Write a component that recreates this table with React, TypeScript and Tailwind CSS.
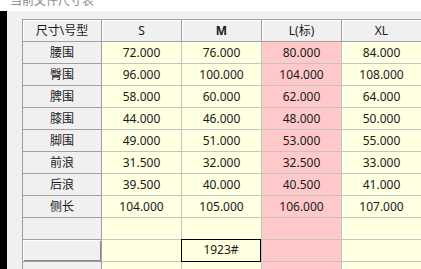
import React from "react";

const cols = ["S", "M", "L(标)", "XL"];
const rows: [string, string[]][] = [
  ["腰围", ["72.000", "76.000", "80.000", "84.000"]],
  ["臀围", ["96.000", "100.000", "104.000", "108.000"]],
  ["脾围", ["58.000", "60.000", "62.000", "64.000"]],
  ["膝围", ["44.000", "46.000", "48.000", "50.000"]],
  ["脚围", ["49.000", "51.000", "53.000", "55.000"]],
  ["前浪", ["31.500", "32.000", "32.500", "33.000"]],
  ["后浪", ["39.500", "40.000", "40.500", "41.000"]],
  ["侧长", ["104.000", "105.000", "106.000", "107.000"]],
  ["", ["", "", "", ""]],
  ["", ["", "1923#", "", ""]],
  ["", ["", "", "", ""]],
];

function DataCell({ v, ci, ri }: { v: string; ci: number; ri: number }) {
  const pink = ci === 2;
  const editing = ri === 9 && ci === 1;
  return (
    <div
      className={`h-[22px] w-[80px] shrink-0 border-r border-b border-[#c4c4c4] flex items-center justify-center ${
        pink ? "bg-[#ffc9c9]" : "bg-[#ffffe1]"
      }`}
    >
      {editing ? (
        <div className="w-full h-full border border-black -ml-[1px] -mt-[1px] box-content flex items-center justify-center bg-[#ffffe1]">
          {v}
        </div>
      ) : (
        v
      )}
    </div>
  );
}

export default function App() {
  return (
    <div
      className="w-[421px] h-[269px] overflow-hidden bg-white flex flex-col text-[12px] text-[#1a1a1a]"
      style={{ fontFamily: '"Noto Sans", "Noto Sans CJK SC", sans-serif' }}
    >
      <div className="h-[11px] shrink-0 overflow-hidden bg-white pl-[10px]">
        <div className="-mt-[7px] text-[12px] leading-[16px] text-[#8a8a8a]">当前文件尺寸表</div>
      </div>
      <div className="flex flex-1 min-h-0">
        <div className="w-[7px] bg-black shrink-0" />
        <div className="flex-1 bg-[#f0f0f0] pl-[15px] pt-[8px] overflow-hidden">
          <div className="border-l border-t border-[#a0a0a0] w-max">
            <div className="flex">
              <div className="h-[22px] w-[79px] shrink-0 border-r border-b border-[#a0a0a0] bg-[#f0f0f0] flex items-center justify-center shadow-[inset_1px_1px_0_#ffffff]">
                尺寸\号型
              </div>
              {cols.map((c) => (
                <div
                  key={c}
                  className={`h-[22px] w-[80px] shrink-0 border-r border-b border-[#a0a0a0] bg-[#f0f0f0] flex items-center justify-center shadow-[inset_1px_1px_0_#ffffff] ${
                    c === "M" ? "font-bold" : ""
                  }`}
                >
                  {c}
                </div>
              ))}
            </div>
            {rows.map(([name, vals], ri) => (
              <div className="flex" key={ri}>
                <div
                  className={`h-[22px] w-[79px] shrink-0 border-r border-b border-[#a0a0a0] bg-[#f0f0f0] flex items-center justify-center ${
                    ri === 9 ? "shadow-[inset_1px_1px_0_#ffffff,inset_-1px_-1px_0_#8a8a8a]" : ""
                  }`}
                >
                  {name}
                </div>
                {vals.map((v, ci) => (
                  <DataCell key={ci} v={v} ci={ci} ri={ri} />
                ))}
              </div>
            ))}
          </div>
        </div>
      </div>
    </div>
  );
}
